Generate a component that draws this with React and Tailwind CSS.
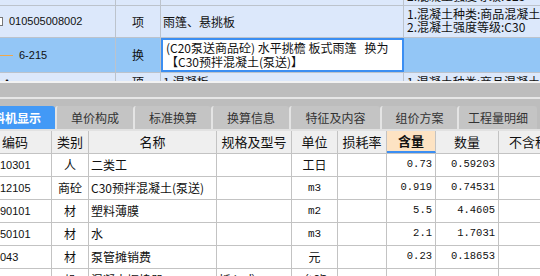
import React from 'react';

const cjk = { fontFamily: '"Noto Sans CJK SC", "Liberation Sans", sans-serif' };

const tabs = ['单价构成', '标准换算', '换算信息', '特征及内容', '组价方案', '工程量明细'];
const tabWidths = ['w-[78px]', 'w-[78px]', 'w-[78px]', 'w-[91px]', 'w-[77px]', 'w-[80px]'];

const cols = [
  { key: 'code', title: '编码', w: 'w-[52px]' },
  { key: 'type', title: '类别', w: 'w-[37px]' },
  { key: 'name', title: '名称', w: 'w-[128px]' },
  { key: 'spec', title: '规格及型号', w: 'w-[75px]' },
  { key: 'unit', title: '单位', w: 'w-[46px]' },
  { key: 'loss', title: '损耗率', w: 'w-[49px]' },
  { key: 'qty', title: '含量', w: 'w-[49px]' },
  { key: 'amount', title: '数量', w: 'w-[63px]' },
  { key: 'price', title: '不含税', w: 'w-[60px]' },
];

const rows = [
  { code: '10301', type: '人', name: '二类工', unit: '工日', qty: '0.73', amount: '0.59203' },
  { code: '12105', type: '商砼', name: 'C30预拌混凝土(泵送)', unit: 'm3', qty: '0.919', amount: '0.74531' },
  { code: '90101', type: '材', name: '塑料薄膜', unit: 'm2', qty: '5.5', amount: '4.4605' },
  { code: '50101', type: '材', name: '水', unit: 'm3', qty: '2.1', amount: '1.7031' },
  { code: '043', type: '材', name: '泵管摊销费', unit: '元', qty: '0.23', amount: '0.18653' },
  { code: '', type: '机', name: '混凝土振捣器', spec: '插入式', unit: '台班', qty: '', amount: '' },
];

function TopGrid() {
  return (
    <div className="h-[81px] overflow-hidden bg-[#dce8fb] text-[12px] text-[#111]" style={cjk}>
      {/* partial row above */}
      <div className="flex h-[6px] border-b border-[#bcc3cc]">
        <div className="w-[116px] border-r border-[#bcc3cc]" />
        <div className="w-[45px] border-r border-[#bcc3cc]" />
        <div className="w-[243px] border-r border-[#bcc3cc]" />
        <div className="flex-1 overflow-hidden">
          <div className="-mt-[11px] pl-[3px] leading-[13px]">2.混凝土强度等级:C25</div>
        </div>
      </div>
      {/* item row */}
      <div className="flex h-[32px] border-b border-[#bcc3cc]">
        <div className="flex w-[116px] items-center overflow-hidden border-r border-[#bcc3cc]">
          <span className="-ml-[6px] mr-[6px] h-[9px] w-[9px] border border-[#777] bg-white" />
          <span className="text-[11px]" style={{ fontFamily: '"Liberation Sans", sans-serif' }}>010505008002</span>
        </div>
        <div className="flex w-[45px] items-center justify-center border-r border-[#bcc3cc]">项</div>
        <div className="flex w-[243px] items-center border-r border-[#bcc3cc] pl-[2px]">雨篷、悬挑板</div>
        <div className="flex flex-1 flex-col gap-[1px] overflow-hidden whitespace-nowrap pl-[3px] pt-[2px]">
          <div className="h-[12px] leading-[12px]">1.混凝土种类:商品混凝土</div>
          <div className="h-[12px] leading-[12px]">2.混凝土强度等级:C30</div>
        </div>
      </div>
      {/* selected row */}
      <div className="flex h-[34px] bg-[#93c6f6]">
        <div className="flex w-[116px] items-center border-r border-[#bcc3cc]">
          <span className="h-[1px] w-[13px] bg-[#f0a84a]" />
          <span className="ml-[6px] text-[11px]" style={{ fontFamily: '"Liberation Sans", sans-serif' }}>6-215</span>
        </div>
        <div className="flex w-[45px] items-center justify-center border-r border-[#bcc3cc]">换</div>
        <div className="flex w-[243px] flex-col gap-[2px] overflow-hidden whitespace-nowrap border-2 border-[#3b8ef2] bg-white pl-[3px] pt-[2px]">
          <div className="h-[12px] leading-[12px]">(C20泵送商品砼) 水平挑檐 板式雨篷&nbsp;&nbsp;&nbsp;换为</div>
          <div className="h-[12px] leading-[12px]">【C30预拌混凝土(泵送)】</div>
        </div>
        <div className="flex-1" />
      </div>
      {/* next row (partial) */}
      <div className="flex h-[20px] border-t border-[#bcc3cc]">
        <div className="w-[116px] border-r border-[#bcc3cc] pl-[1px] pt-[1px] leading-[13px]">·</div>
        <div className="flex w-[45px] justify-center border-r border-[#bcc3cc] pt-[2px] leading-[13px]">项</div>
        <div className="w-[243px] border-r border-[#bcc3cc] pl-[2px] pt-[2px] leading-[13px]">1.混凝板</div>
        <div className="flex-1 whitespace-nowrap pl-[3px] pt-[2px] leading-[13px]">1.混凝土种类:商品混凝土</div>
      </div>
    </div>
  );
}

function Splitter() {
  return (
    <div>
      <div className="h-[2px] bg-[#f2f2f2]" />
      <div className="h-[14px] bg-[#bdbdbd]" />
      <div className="h-[2px] bg-[#e6e6e6]" />
    </div>
  );
}

function Tabs() {
  return (
    <div className="flex h-[30px] items-end overflow-hidden bg-[#bdbdbd] text-[12px]" style={cjk}>
      <div className="flex h-[23px] w-[55px] shrink-0 items-center justify-end overflow-hidden whitespace-nowrap rounded-tr-[3px] bg-[#4299f6] pr-[14px] font-bold text-white">
        工料机显示
      </div>
      {tabs.map((t, i) => (
        <div
          key={t}
          className={`flex h-[23px] shrink-0 items-center justify-center whitespace-nowrap rounded-t-[3px] border-l-2 border-[#e4e4e4] bg-[#c4c4c4] text-[#333] ${tabWidths[i]}`}
        >
          {t}
        </div>
      ))}
    </div>
  );
}

function Cell({ col, children, align, active }) {
  const justify = align === 'right' ? 'justify-end pr-[3px]' : align === 'left' ? 'justify-start pl-[2px]' : 'justify-center';
  return (
    <div
      className={`flex h-full shrink-0 items-center overflow-hidden whitespace-nowrap border-r border-[#c3c3c3] ${col.w} ${justify} ${
        active ? 'border-b-2 border-b-[#3b8ef2] bg-[#fde3c3] font-bold' : ''
      }`}
    >
      {children}
    </div>
  );
}

function Table() {
  const num = { fontFamily: '"Liberation Mono", monospace' };
  const lat = { fontFamily: '"Liberation Sans", "Noto Sans CJK SC", sans-serif' };
  return (
    <div className="text-[#111]" style={cjk}>
      <div className="flex h-[25px] border-b border-t-2 border-[#c3c3c3] border-t-[#e2e2e2] bg-[#efefef] text-[13px]">
        {cols.map((c, i) => (
          <Cell key={c.key} col={c} align={i === 0 ? 'left' : 'center'} active={c.key === 'qty'}>
            {c.title}
          </Cell>
        ))}
      </div>
      {rows.map((r, idx) => (
        <div key={idx} className="flex h-[23px] border-b border-[#c3c3c3] bg-white text-[12px]">
          <Cell col={cols[0]} align="left">
            <span className="-ml-[2px] text-[11px]" style={lat}>{r.code}</span>
          </Cell>
          <Cell col={cols[1]}>{r.type}</Cell>
          <Cell col={cols[2]} align="left">{r.name}</Cell>
          <Cell col={cols[3]} align="left">{r.spec || ''}</Cell>
          <Cell col={cols[4]}>
            <span className={/^[a-z]/.test(r.unit) ? 'text-[11px]' : ''} style={/^[a-z]/.test(r.unit) ? num : undefined}>{r.unit}</span>
          </Cell>
          <Cell col={cols[5]} />
          <Cell col={cols[6]} align="right">
            <span className="text-[10.5px]" style={num}>{r.qty}</span>
          </Cell>
          <Cell col={cols[7]} align="right">
            <span className="text-[10.5px]" style={num}>{r.amount}</span>
          </Cell>
          <Cell col={cols[8]} />
        </div>
      ))}
    </div>
  );
}

export default function App() {
  return (
    <div className="h-[276px] w-[540px] overflow-hidden bg-white">
      <TopGrid />
      <Splitter />
      <Tabs />
      <Table />
    </div>
  );
}
